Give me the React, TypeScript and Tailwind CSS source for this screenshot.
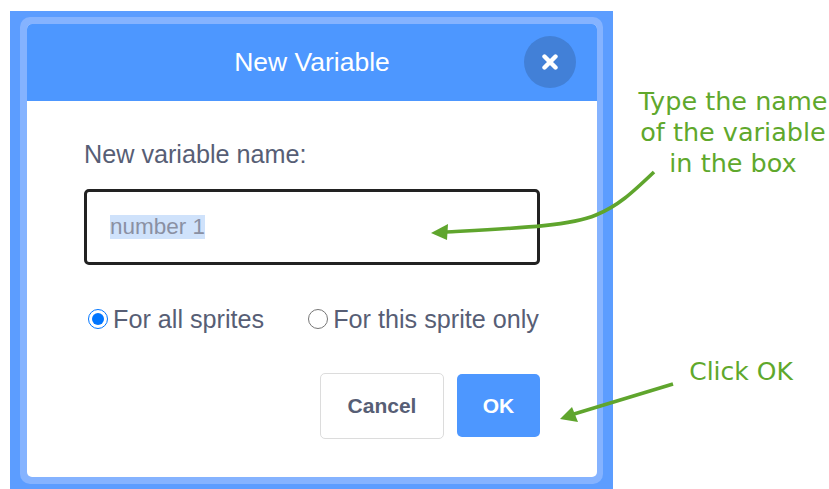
const arial = 'font-["Liberation_Sans",Arial,sans-serif]';

const App = () => {
  return (
    <div className="relative flex h-[489px] w-[829px] overflow-hidden bg-white pl-[10px] pt-[11px]">
      {/* dialog with its double frame */}
      <div className={`h-[478px] w-[603px] shrink-0 bg-[#5c9dff] pl-[10px] pr-[10px] pt-[6px] ${arial}`}>
        <div className="h-[467px] w-[583px] rounded-[10px] bg-[#85b3ff] p-[7px] pr-[6px]">
          <div className="h-[453px] overflow-hidden rounded-[5px] bg-white">
            <div className="relative flex h-[77px] items-center justify-center bg-[#4d97ff]">
              <span className="text-[26.5px] text-white">New Variable</span>
              <button className="absolute right-[21px] top-[12px] flex h-[52px] w-[52px] items-center justify-center rounded-full bg-[#4280d7]">
                <svg width="16" height="16" viewBox="0 0 16 16">
                  <path d="M2.5 2.5 L13.5 13.5 M13.5 2.5 L2.5 13.5" stroke="#fff" strokeWidth="4.4" strokeLinecap="round" />
                </svg>
              </button>
            </div>

            <div className="px-[57px] pt-[38px] text-[#575e75]">
              <p className="text-[25.2px] leading-[30px]">New variable name:</p>
              <div className="mt-[20px] flex h-[76px] w-[456px] items-center rounded-[5px] border-[3px] border-[#222222] pl-[23px]">
                <span className="bg-[#cfe2fb] text-[22.5px] leading-[24px] text-[#8a90a3]">number 1</span>
              </div>

              <div className="mt-[39px] flex items-center text-[25.2px] leading-[30px]">
                <input type="radio" name="scope" defaultChecked className="m-0 ml-[4px] h-[20px] w-[20px] accent-[#0075ff]" />
                <span className="ml-[5px]">For all sprites</span>
                <input type="radio" name="scope" className="m-0 ml-[44px] h-[20px] w-[20px]" />
                <span className="ml-[5px]">For this sprite only</span>
              </div>

              <div className="mt-[39px] flex items-start justify-end gap-[13px]">
                <button className="h-[66px] w-[124px] rounded-[5px] border border-[#dcdcdc] bg-white text-[21px] font-bold text-[#575e75]">
                  Cancel
                </button>
                <button className="mt-px h-[63px] w-[83px] rounded-[5px] bg-[#4d97ff] text-[21px] font-bold text-white">
                  OK
                </button>
              </div>
            </div>
          </div>
        </div>
      </div>

      {/* green notes beside the dialog */}
      <div className='flex w-[216px] shrink-0 flex-col items-center pl-[24px] font-["DejaVu_Sans",Verdana,sans-serif] text-[#5fa82c]'>
        <p className="mt-[75px] whitespace-nowrap text-center text-[25.5px] leading-[31px]">
          Type the name
          <br />
          of the variable
          <br />
          in the box
        </p>
        <p className="ml-[16px] mt-[177px] whitespace-nowrap text-[25px] leading-[31px]">Click OK</p>
      </div>

      {/* arrows drawn across the dialog edge */}
      <svg className="absolute left-0 top-0" width="829" height="489" viewBox="0 0 829 489" fill="none">
        <path d="M654 172 C632 193 618 206 596 215 C570 226 520 228 446 232" stroke="#5fa52d" strokeWidth="3.6" />
        <path d="M431 233 L448 224 L447 240 Z" fill="#5fa52d" />
        <path d="M673 384 L574 414" stroke="#5fa52d" strokeWidth="3.6" />
        <path d="M560 419 L572 407 L578 422 Z" fill="#5fa52d" />
      </svg>
    </div>
  );
};

export default App;
